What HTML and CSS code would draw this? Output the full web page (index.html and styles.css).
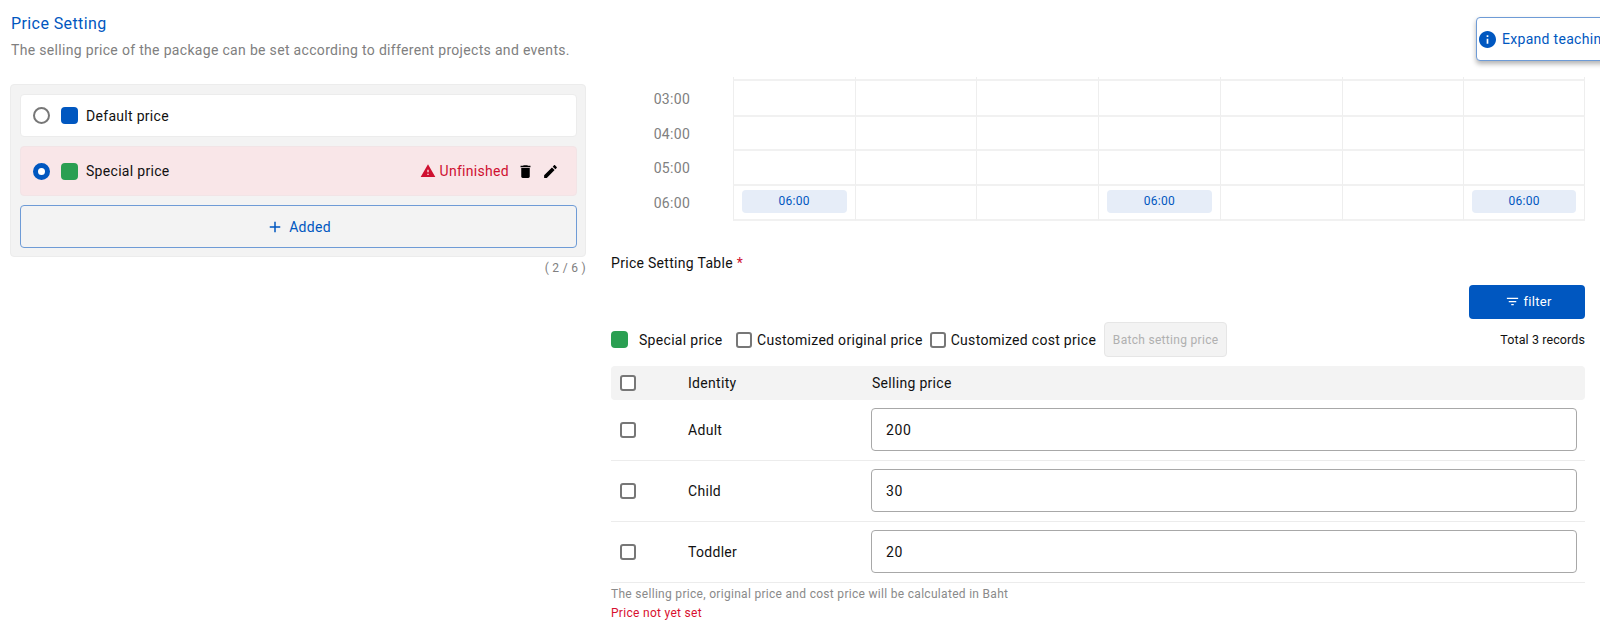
FILE: index.html
```html
<!DOCTYPE html>
<html lang="en">
<head>
<meta charset="utf-8">
<title>Price Setting</title>
<link rel="stylesheet" href="styles.css">
</head>
<body>
<div class="page">
  <section class="left">
    <h2 class="title">Price Setting</h2>
    <p class="subtitle">The selling price of the package can be set according to different projects and events.</p>
    <div class="panel">
      <div class="option">
        <span class="radio"></span>
        <span class="swatch swatch-blue"></span>
        <span class="option-label">Default price</span>
      </div>
      <div class="option option-active">
        <span class="radio radio-on"></span>
        <span class="swatch swatch-green"></span>
        <span class="option-label">Special price</span>
        <span class="status">
          <svg class="status-icon" viewBox="0 0 24 24"><path d="M1 21h22L12 2 1 21zm12-3h-2v-2h2v2zm0-4h-2v-4h2v4z"/></svg>
          Unfinished
        </span>
        <svg class="action" viewBox="0 0 24 24"><path d="M6 19c0 1.1.9 2 2 2h8c1.1 0 2-.9 2-2V7H6v12zM19 4h-3.500l-1-1h-5l-1 1H5v2h14V4z"/></svg>
        <svg class="action" viewBox="0 0 24 24"><path d="M3 17.250V21h3.750L17.810 9.940l-3.750-3.750L3 17.250zM20.710 7.040c.39-.39.39-1.020 0-1.410l-2.340-2.340c-.39-.39-1.020-.39-1.410 0l-1.830 1.830 3.750 3.750 1.830-1.830z"/></svg>
      </div>
      <button class="add" type="button">
        <svg class="add-icon" viewBox="0 0 24 24"><path d="M19 13h-6v6h-2v-6H5v-2h6V5h2v6h6v2z"/></svg>
        Added
      </button>
    </div>
    <div class="count">( 2 / 6 )</div>
  </section>

  <section class="right">
    <div class="schedule">
      <div class="stub"></div><div class="stub cell"></div><div class="stub cell"></div><div class="stub cell"></div><div class="stub cell"></div><div class="stub cell"></div><div class="stub cell"></div><div class="stub cell cell-last"></div>

      <div class="time">03:00</div><div class="cell"></div><div class="cell"></div><div class="cell"></div><div class="cell"></div><div class="cell"></div><div class="cell"></div><div class="cell cell-last"></div>
      <div class="time">04:00</div><div class="cell"></div><div class="cell"></div><div class="cell"></div><div class="cell"></div><div class="cell"></div><div class="cell"></div><div class="cell cell-last"></div>
      <div class="time">05:00</div><div class="cell"></div><div class="cell"></div><div class="cell"></div><div class="cell"></div><div class="cell"></div><div class="cell"></div><div class="cell cell-last"></div>
      <div class="time">06:00</div>
      <div class="cell"><span class="event">06:00</span></div><div class="cell"></div><div class="cell"></div>
      <div class="cell"><span class="event">06:00</span></div><div class="cell"></div><div class="cell"></div>
      <div class="cell cell-last"><span class="event">06:00</span></div>
    </div>

    <div class="field-label">Price Setting Table <span class="required">*</span></div>

    <div class="filter-row">
      <button class="filter" type="button">
        <svg class="filter-icon" viewBox="0 0 24 24"><path d="M10 18h4v-2h-4v2zM3 6v2h18V6H3zm3 7h12v-2H6v2z"/></svg>
        filter
      </button>
    </div>

    <div class="tools">
      <span class="swatch swatch-green"></span>
      <span class="tools-name">Special price</span>
      <label class="check-label"><input class="check" type="checkbox">Customized original price</label>
      <label class="check-label"><input class="check" type="checkbox">Customized cost price</label>
      <button class="batch" type="button">Batch setting price</button>
      <span class="total">Total 3 records</span>
    </div>

    <div class="table">
      <div class="tr th">
        <span class="td-check"><input class="check" type="checkbox"></span>
        <span class="td-name">Identity</span>
        <span class="td-price">Selling price</span>
      </div>
      <div class="tr">
        <span class="td-check"><input class="check" type="checkbox"></span>
        <span class="td-name">Adult</span>
        <span class="td-price"><input class="price" type="text" value="200"></span>
      </div>
      <div class="tr">
        <span class="td-check"><input class="check" type="checkbox"></span>
        <span class="td-name">Child</span>
        <span class="td-price"><input class="price" type="text" value="30"></span>
      </div>
      <div class="tr">
        <span class="td-check"><input class="check" type="checkbox"></span>
        <span class="td-name">Toddler</span>
        <span class="td-price"><input class="price" type="text" value="20"></span>
      </div>
    </div>
    <p class="note">The selling price, original price and cost price will be calculated in Baht</p>
    <p class="error">Price not yet set</p>
  </section>
</div>

<button class="teaching" type="button">
  <svg class="teaching-icon" viewBox="2 2 20 20"><path d="M12 2C6.480 2 2 6.480 2 12s4.480 10 10 10 10-4.480 10-10S17.520 2 12 2zm1 15h-2v-6h2v6zm0-8h-2V7h2v2z"/></svg>
  Expand teaching
</button>
</body>
</html>
```

FILE: styles.css
```css
* { box-sizing: border-box; }
html, body { margin: 0; height: 100%; overflow: hidden; background: #fff; }
body { font-family: Roboto, "Liberation Sans", sans-serif; font-size: 14px; letter-spacing: .3px; color: #111; position: relative; }
button, input { font-family: inherit; letter-spacing: inherit; }
p, h2 { margin: 0; }

.page { display: flex; gap: 25px; padding: 0 15px 0 10px; }

.left { width: 576px; flex: none; padding-top: 14px; }
.title { font-size: 16px; font-weight: 400; line-height: 20px; color: #0057c0; padding-left: 1px; letter-spacing: .4px; }
.subtitle { font-size: 14px; line-height: 20px; color: #808080; margin-top: 6px; padding-left: 1px; letter-spacing: .32px; white-space: nowrap; }

.panel { margin-top: 24px; height: 173px; padding: 9px 8px 0 9px; background: #f3f3f3; border: 1px solid #ececec; border-radius: 4px; display: flex; flex-direction: column; gap: 9px; }
.option { height: 43px; flex: none; display: flex; align-items: center; padding: 0 17px 0 12px; background: #fff; border: 1px solid #ececec; border-radius: 4px; }
.option-active { height: 50px; background: #f9e6e8; border-color: #f2e4e6; }
.radio { width: 17px; height: 17px; border-radius: 50%; border: 2px solid #777; background: #fff; flex: none; }
.radio-on { border: 5px solid #0057c0; }
.swatch { width: 17px; height: 17px; border-radius: 4px; flex: none; }
.swatch-blue { background: #0057c0; }
.swatch-green { background: #2a9f52; }
.option .swatch { margin-left: 11px; }
.option-label { margin-left: 8px; color: #111; }
.status { margin-left: auto; display: flex; align-items: center; gap: 4px; color: #cf1030; }
.status-icon { width: 16px; height: 16px; fill: #cf1030; }
.action { width: 17px; height: 17px; fill: #000; margin-left: 8px; flex: none; }
.status + .action { margin-left: 8px; }
.add { height: 43px; flex: none; display: flex; align-items: center; justify-content: center; gap: 5px; background: #f3f3f3; border: 1px solid #6e9bd6; border-radius: 4px; color: #0057c0; font-size: 14px; }
.add-icon { width: 18px; height: 18px; fill: #0057c0; }
.count { text-align: right; font-size: 12px; line-height: 16px; color: #808080; margin-top: 3px; }

.right { flex: 1; min-width: 0; padding-top: 77px; position: relative; }
.schedule { display: grid; grid-template-columns: repeat(8, 1fr); grid-template-rows: 4px 36px 34px 35px 35px; }
.cell { border-left: 1px solid #eee; border-bottom: 2px solid #f1f1f1; display: flex; padding: 4px 8px 0; }
.cell-last { border-right: 1px solid #eee; }
.stub { padding: 0; }
.time { text-align: center; color: #808080; display: flex; align-items: center; justify-content: center; padding-bottom: 1px; }
.event { flex: 1; height: 23px; background: #e6edf8; border-radius: 4px; color: #0057c0; font-size: 12px; line-height: 22px; text-align: center; }

.field-label { margin-top: 32px; line-height: 20px; color: #111; }
.required { color: #cf1030; }

.filter-row { display: flex; justify-content: flex-end; margin-top: 12px; }
.filter { width: 116px; height: 34px; display: flex; align-items: center; justify-content: center; gap: 3px; background: #0057c0; color: #fff; border: 0; border-radius: 4px; font-size: 13px; padding: 0 0 1px 3px; }
.filter-icon { width: 15px; height: 15px; fill: #fff; }

.tools { display: flex; align-items: center; margin-top: 3px; height: 35px; }
.tools-name { margin-left: 11px; width: 97px; flex: none; }
.check-label { display: flex; align-items: center; gap: 5px; margin-right: 7px; }
.check { appearance: none; -webkit-appearance: none; width: 16px; height: 16px; margin: 0; border: 2px solid #777; border-radius: 3px; background: #fff; flex: none; }
.batch { width: 123px; height: 35px; padding: 0; margin-left: 1px; background: #f3f3f3; border: 1px solid #e6e6e6; border-radius: 4px; color: #b0b0b0; font-size: 12px; }
.total { margin-left: auto; font-size: 12.500px; letter-spacing: .1px; }

.table { margin-top: 9px; }
.tr { display: flex; align-items: center; height: 61px; border-bottom: 1px solid #ececec; }
.th { height: 34px; background: #f3f3f3; border: 0; border-radius: 4px; }
.td-check { width: 77px; flex: none; padding-left: 9px; display: flex; }
.td-name { width: 183px; flex: none; }
.td-price { flex: 1; padding-right: 8px; display: flex; }
.th .td-price { padding-left: 1px; }
.price { width: 100%; height: 43px; margin-top: -2px; padding: 2px 14px 0; border: 1px solid #a8a8a8; border-radius: 4px; font-size: 14px; letter-spacing: .6px; color: #111; background: #fff; outline: 0; }

.note { font-size: 12px; line-height: 16px; color: #8a8a8a; margin-top: 3px; }
.error { font-size: 12px; line-height: 16px; color: #d8102f; margin-top: 3px; }

.teaching { position: absolute; top: 17px; left: 1476px; width: 180px; height: 44px; display: flex; align-items: center; gap: 6px; padding: 0 0 0 2px; background: #fff; border: 1px solid #6e9bd6; border-radius: 4px; box-shadow: 0 3px 5px rgba(0,0,0,.3); color: #0057c0; font-size: 14px; white-space: nowrap; }
.teaching-icon { width: 17px; height: 17px; fill: #0057c0; flex: none; }
```
